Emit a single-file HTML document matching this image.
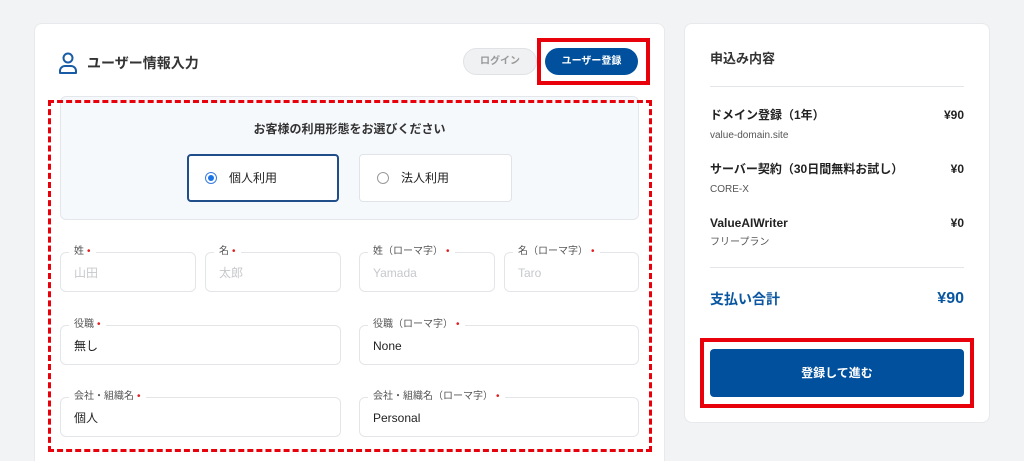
<!DOCTYPE html>
<html><head><meta charset="utf-8"><style>
*{box-sizing:border-box;margin:0;padding:0}
html,body{width:1024px;height:461px;overflow:hidden}
body{background:#f2f3f5;font-family:"Liberation Sans","Noto Sans CJK JP",sans-serif;color:#222;position:relative}
.abs{position:absolute}
.card{background:#fff;border-radius:8px;border:1px solid #e8e9ec}
.b{font-weight:bold}
.field{position:absolute;height:40px;border:1px solid #e3e5e8;border-radius:6px;background:#fff}
.field .lb{position:absolute;top:-8px;left:8px;background:#fff;padding:0 5px;font-size:10px;color:#555;line-height:14px}
.field .lb i{color:#e02020;font-style:normal;margin-left:3px}
.field .v{position:absolute;left:13px;top:12px;font-size:12px;line-height:16px;color:#222}
.field .v.ph{color:#c6c8cc}
.row{position:absolute;left:710px;width:254px;font-size:12px;line-height:16px;height:16px;display:flex;justify-content:space-between;align-items:center}
.sub{position:absolute;left:710px;font-size:10px;color:#555;line-height:14px}
.pill{display:flex;align-items:center;justify-content:center}
</style></head><body>
<div class="abs card" style="left:34px;top:23px;width:631px;height:460px"></div>
<div class="abs card" style="left:684px;top:23px;width:306px;height:400px"></div>

<svg class="abs" style="left:58px;top:51px" width="20" height="24" viewBox="0 0 20 24"><circle cx="10" cy="7" r="4.5" fill="none" stroke="#1a5ba6" stroke-width="2"/><path d="M2 22v-2a5 5 0 0 1 5-5h6a5 5 0 0 1 5 5v2z" fill="none" stroke="#1a5ba6" stroke-width="2" stroke-linejoin="round"/></svg>
<div class="abs b" style="left:87px;top:53px;font-size:14px;line-height:20px;color:#333">ユーザー情報入力</div>

<div class="abs pill" style="left:463px;top:48px;width:74px;height:27px;border-radius:14px;background:#f0f1f2;border:1px solid #e0e2e5;font-size:10px;color:#999;font-weight:bold;line-height:12px">ログイン</div>
<div class="abs" style="left:537px;top:38px;width:113px;height:47px;border:4px solid #e8000b"></div>
<div class="abs pill" style="left:545px;top:48px;width:93px;height:27px;border-radius:14px;background:#00509e;font-size:10px;color:#fff;font-weight:bold;line-height:12px">ユーザー登録</div>

<div class="abs" style="left:60px;top:96px;width:579px;height:124px;background:#f6f9fc;border:1px solid #e3e6ea;border-radius:6px"></div>
<div class="abs b" style="left:60px;top:121px;width:579px;text-align:center;font-size:12px;line-height:16px;color:#333">お客様の利用形態をお選びください</div>
<div class="abs" style="left:187px;top:154px;width:152px;height:48px;background:#fff;border:2px solid #1f4e8a;border-radius:4px"></div>
<div class="abs" style="left:205px;top:172px;width:12px;height:12px;border-radius:50%;border:1px solid #3a7be0;background:#fff"><div style="margin:2px;width:6px;height:6px;border-radius:50%;background:#1a73e8"></div></div>
<div class="abs" style="left:229px;top:170px;font-size:12px;line-height:16px">個人利用</div>
<div class="abs" style="left:359px;top:154px;width:153px;height:48px;background:#fff;border:1px solid #e0e3e7;border-radius:4px"></div>
<div class="abs" style="left:377px;top:172px;width:12px;height:12px;border-radius:50%;border:1px solid #999;background:#fff"></div>
<div class="abs" style="left:401px;top:170px;font-size:12px;line-height:16px">法人利用</div>

<div class="field" style="left:60px;top:252px;width:136px"><span class="lb">姓<i>•</i></span><span class="v ph">山田</span></div>
<div class="field" style="left:205px;top:252px;width:136px"><span class="lb">名<i>•</i></span><span class="v ph">太郎</span></div>
<div class="field" style="left:359px;top:252px;width:136px"><span class="lb">姓（ローマ字）<i>•</i></span><span class="v ph">Yamada</span></div>
<div class="field" style="left:504px;top:252px;width:135px"><span class="lb">名（ローマ字）<i>•</i></span><span class="v ph">Taro</span></div>
<div class="field" style="left:60px;top:325px;width:281px"><span class="lb">役職<i>•</i></span><span class="v">無し</span></div>
<div class="field" style="left:359px;top:325px;width:280px"><span class="lb">役職（ローマ字）<i>•</i></span><span class="v">None</span></div>
<div class="field" style="left:60px;top:397px;width:281px"><span class="lb">会社・組織名<i>•</i></span><span class="v">個人</span></div>
<div class="field" style="left:359px;top:397px;width:280px"><span class="lb">会社・組織名（ローマ字）<i>•</i></span><span class="v">Personal</span></div>

<div class="abs" style="left:48px;top:100px;width:604px;height:352px;border:3px dashed #e8000b"></div>

<div class="abs b" style="left:710px;top:50px;font-size:13px;line-height:18px;color:#333">申込み内容</div>
<div class="abs" style="left:710px;top:86px;width:254px;height:1px;background:#e3e5e8"></div>
<div class="row b" style="top:107px"><span>ドメイン登録（1年）</span><span>¥90</span></div>
<div class="sub" style="top:129px">value-domain.site</div>
<div class="row b" style="top:161px"><span>サーバー契約（30日間無料お試し）</span><span>¥0</span></div>
<div class="sub" style="top:183px">CORE-X</div>
<div class="row b" style="top:215px"><span>ValueAIWriter</span><span>¥0</span></div>
<div class="sub" style="top:236px">フリープラン</div>
<div class="abs" style="left:710px;top:267px;width:254px;height:1px;background:#e3e5e8"></div>
<div class="abs b" style="left:710px;top:289px;width:254px;height:20px;display:flex;justify-content:space-between;align-items:center;color:#0a56a0;line-height:20px"><span style="font-size:14px">支払い合計</span><span style="font-size:16px">¥90</span></div>
<div class="abs" style="left:700px;top:338px;width:274px;height:70px;border:4px solid #e8000b"></div>
<div class="abs b pill" style="left:710px;top:349px;width:254px;height:48px;background:#00509e;border-radius:4px;color:#fff;font-size:12px;line-height:16px">登録して進む</div>
</body></html>
